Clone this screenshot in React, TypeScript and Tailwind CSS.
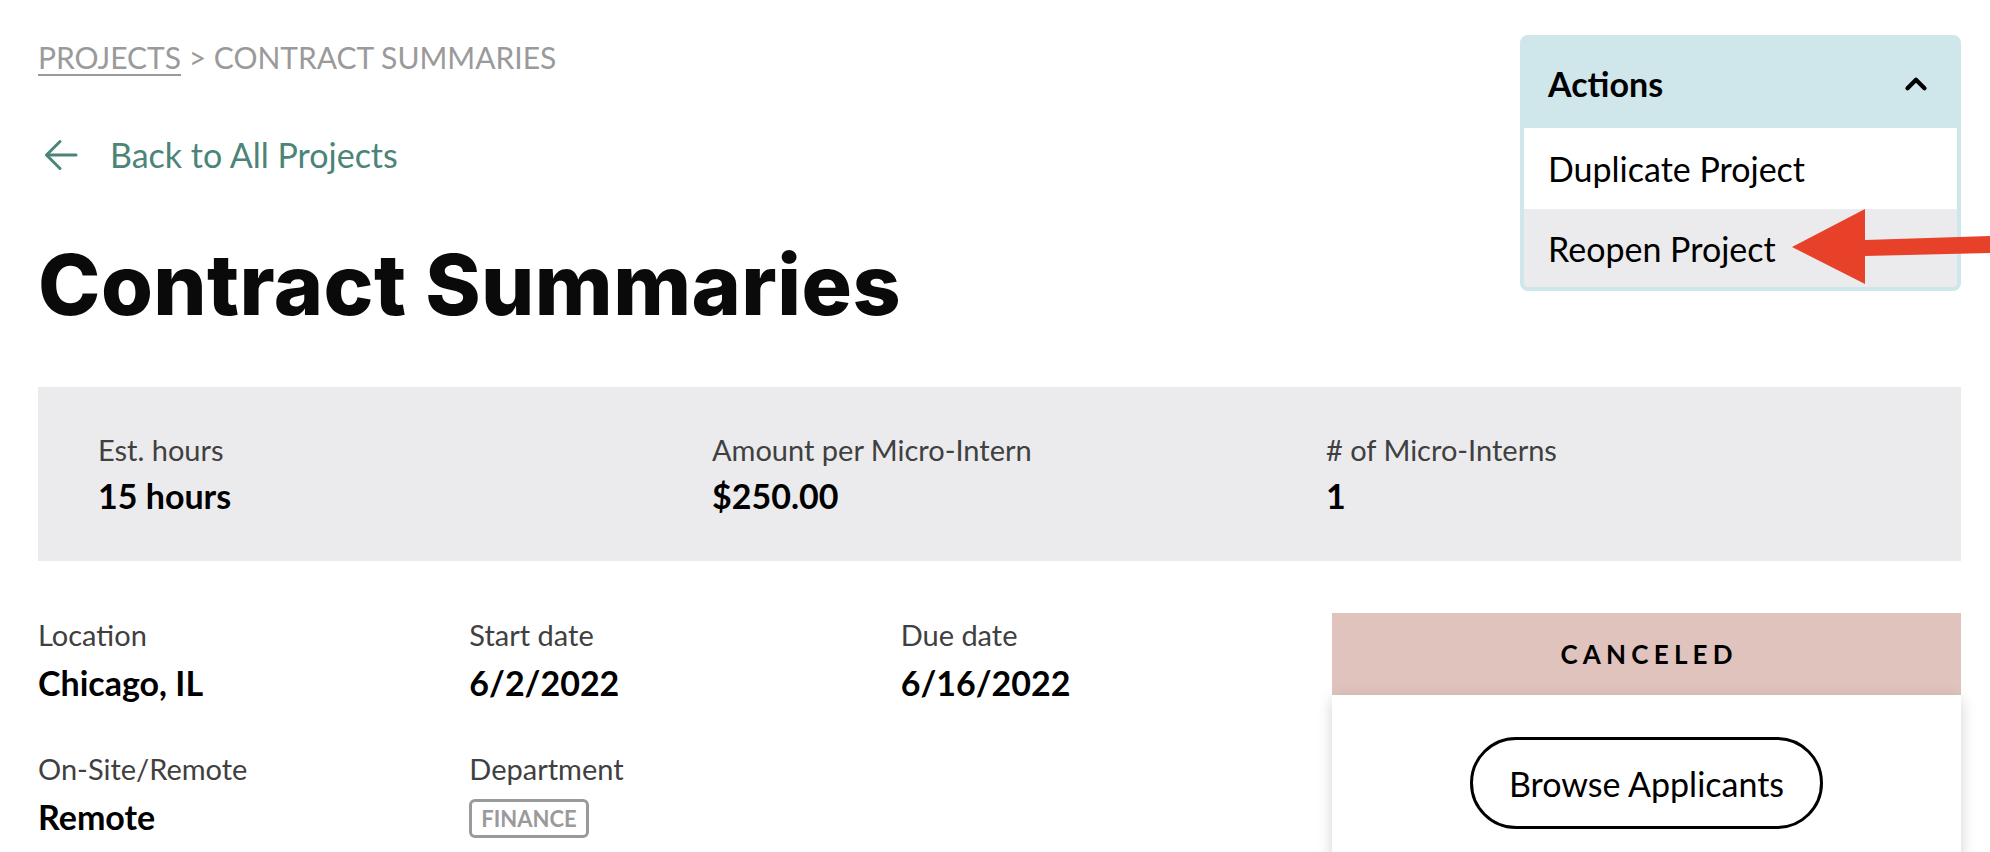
import { ChevronUp } from "lucide-react"

const lato = "font-['Lato',_'Liberation_Sans',_sans-serif]"

function Stat({ label, value }: { label: string; value: string }) {
  return (
    <div className="flex flex-col">
      <span className="text-[29px] leading-[30px] text-[#404040]">{label}</span>
      <span className="mt-[13px] text-[34px] leading-[36px] font-bold text-black">{value}</span>
    </div>
  )
}

function Detail({ label, children }: { label: string; children: React.ReactNode }) {
  return (
    <div className="flex flex-col">
      <span className="text-[29px] leading-[30px] text-[#404040]">{label}</span>
      <div className="mt-[15px]">{children}</div>
    </div>
  )
}

function Value({ text }: { text: string }) {
  return <span className="block text-[34px] leading-[36px] font-bold text-black">{text}</span>
}

function BackArrow() {
  return (
    <svg width="34" height="32" viewBox="0 0 34 32" fill="none" stroke="currentColor" strokeWidth="3" strokeLinecap="round" strokeLinejoin="round">
      <path d="M32 16H3" />
      <path d="M16 2.5L2.5 16L16 29.5" />
    </svg>
  )
}

function ActionsMenu() {
  return (
    <div className="w-[441px] rounded-[8px] border-[4px] border-[#cfe6ea] bg-[#cfe6ea] overflow-hidden">
      <div className="flex h-[89px] items-center justify-between pl-[24px] pr-[24px]">
        <span className="text-[34px] font-bold text-black">Actions</span>
        <ChevronUp className="h-[34px] w-[34px] text-black" strokeWidth={3} />
      </div>
      <div className="flex h-[81px] items-center bg-white pl-[24px]">
        <span className="text-[34px] text-black">Duplicate Project</span>
      </div>
      <div className="flex h-[78px] items-center bg-[#ebebed] pl-[24px]">
        <span className="text-[34px] text-black">Reopen Project</span>
      </div>
    </div>
  )
}

export default function App() {
  return (
    <div className={`relative min-h-screen w-full overflow-hidden bg-white pl-[38px] pr-[29px] pt-[35px] ${lato}`}>
      <div className="flex items-start justify-between">
        <div className="flex flex-col">
          <div className="mt-[5px] text-[30px] leading-[34px] text-[#9a9a9a]">
            <span className="underline underline-offset-[5px] decoration-[2px]">PROJECTS</span>
            <span> &gt; CONTRACT SUMMARIES</span>
          </div>
          <a className="mt-[63px] flex h-[36px] items-center text-[#4b8478]">
            <span className="ml-[6px] flex">
              <BackArrow />
            </span>
            <span className="ml-[32px] text-[34px] leading-[36px]">Back to All Projects</span>
          </a>
          <h1 className="mt-[71px] font-['Inter',_'Liberation_Sans',_sans-serif] text-[84px] leading-[81px] font-extrabold tracking-[0.005em] text-[#0a0a0a]">
            Contract Summaries
          </h1>
        </div>
        <ActionsMenu />
      </div>

      <div className="mt-[62px] grid h-[174px] grid-cols-[614px_614px_1fr] bg-[#ebebed] pl-[60px] pt-[48px]">
        <Stat label="Est. hours" value="15 hours" />
        <Stat label="Amount per Micro-Intern" value="$250.00" />
        <Stat label="# of Micro-Interns" value="1" />
      </div>

      <div className="mt-[52px] flex items-start">
        <div className="grid w-[1294px] grid-cols-3 gap-y-[53px] pt-[7px]">
          <Detail label="Location"><Value text="Chicago, IL" /></Detail>
          <Detail label="Start date"><Value text="6/2/2022" /></Detail>
          <Detail label="Due date"><Value text="6/16/2022" /></Detail>
          <Detail label="On-Site/Remote"><Value text="Remote" /></Detail>
          <Detail label="Department">
            <span className="inline-flex h-[39px] items-center rounded-[6px] border-[3px] border-[#9a9a9a] px-[9px] text-[22px] font-bold text-[#9a9a9a]">
              FINANCE
            </span>
          </Detail>
        </div>
        <div className="flex flex-1 flex-col">
          <div className="flex h-[82px] items-center justify-center bg-[#e0c3bd]">
            <span className="pl-[0.2em] text-[26px] font-bold tracking-[0.2em] text-black">CANCELED</span>
          </div>
          <div className="flex h-[260px] justify-center bg-white pt-[42px] shadow-[0_4px_14px_rgba(0,0,0,0.18)]">
            <button className="h-[92px] w-[353px] rounded-full border-[3px] border-black text-[34px] text-black">
              Browse Applicants
            </button>
          </div>
        </div>
      </div>

      <svg className="absolute left-[1785px] top-[205px]" width="205" height="85" viewBox="0 0 205 85">
        <polygon points="7,42 80,4 80,35 205,31 205,48 80,51 80,79" fill="#e8412a" />
      </svg>
    </div>
  )
}
